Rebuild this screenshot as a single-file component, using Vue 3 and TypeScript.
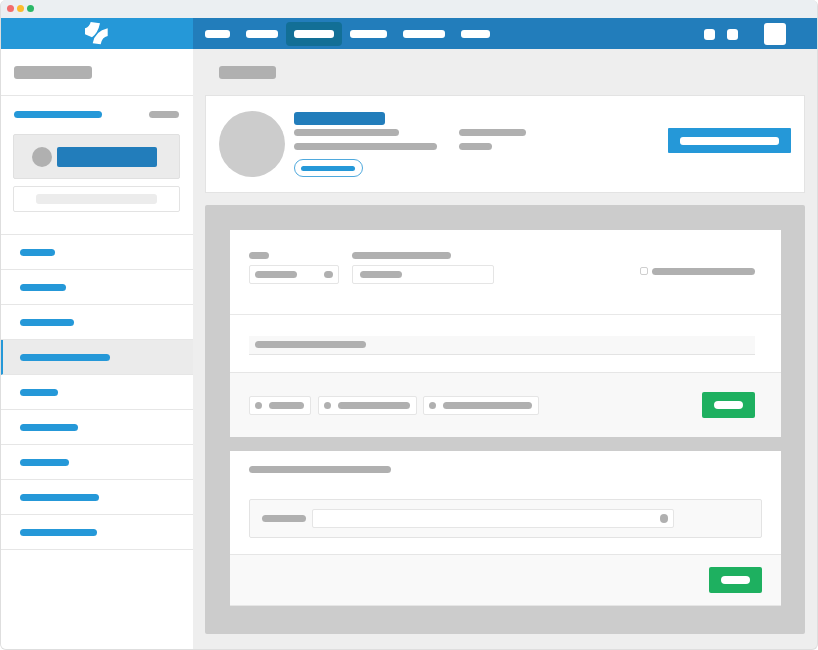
<script setup lang="ts">
interface SideItem {
  id: number
  width: number
  active?: boolean
}

const topLinks = [25, 32, 40, 37, 42, 29]
const activeLink = 2

const sideItems: SideItem[] = [
  { id: 1, width: 35 },
  { id: 2, width: 46 },
  { id: 3, width: 54 },
  { id: 4, width: 90, active: true },
  { id: 5, width: 38 },
  { id: 6, width: 58 },
  { id: 7, width: 49 },
  { id: 8, width: 79 },
  { id: 9, width: 77 }
]

const chips = [35, 72, 89]
</script>

<template>
  <div class="window">
    <div class="titlebar">
      <i class="light red"></i>
      <i class="light yellow"></i>
      <i class="light green"></i>
    </div>

    <header class="topbar">
      <div class="brand">
        <svg width="24" height="23" viewBox="0 0 24 23" fill="#fff">
          <path d="M5.700 0 L15 1.300 Q13 11 7 15.300 L0 12.300 L0 6.300 Q4.500 5 5.700 0 Z" />
          <path d="M22.700 6.300 L22.700 14 Q17 15 15.700 22.300 L7.700 21.300 Q10 9 22.700 6.300 Z" />
        </svg>
      </div>
      <nav class="top-nav">
        <div
          v-for="(w, i) in topLinks"
          :key="i"
          class="top-link"
          :class="{ current: i === activeLink }"
        >
          <span class="top-pill" :style="{ width: w + 'px' }"></span>
        </div>
      </nav>
      <div class="top-right">
        <span class="square"></span>
        <span class="square"></span>
        <span class="avatar-small"></span>
      </div>
    </header>

    <div class="body">
      <aside class="sidebar">
        <div class="side-head">
          <span class="bar side-title"></span>
        </div>
        <div class="side-account">
          <div class="account-row">
            <span class="bar blue account-name"></span>
            <span class="bar account-meta"></span>
          </div>
          <div class="account-box">
            <span class="account-dot"></span>
            <span class="account-btn"></span>
          </div>
          <div class="account-input">
            <span class="account-hint"></span>
          </div>
        </div>
        <div
          v-for="item in sideItems"
          :key="item.id"
          class="side-item"
          :class="{ active: item.active }"
        >
          <span class="bar blue" :style="{ width: item.width + 'px' }"></span>
        </div>
      </aside>

      <main class="main">
        <span class="bar crumb"></span>

        <section class="profile">
          <div class="photo"></div>
          <div class="profile-info">
            <span class="profile-name"></span>
            <span class="bar w105"></span>
            <span class="bar w143"></span>
            <span class="outline-btn"><span class="outline-inner"></span></span>
          </div>
          <div class="profile-meta">
            <span class="bar w67"></span>
            <span class="bar w33"></span>
          </div>
          <div class="primary-btn"><span class="primary-inner"></span></div>
        </section>

        <section class="panel">
          <div class="card">
            <div class="filters">
              <div class="field">
                <span class="bar w20"></span>
                <div class="select">
                  <span class="bar w42"></span>
                  <span class="dot"></span>
                </div>
              </div>
              <div class="field">
                <span class="bar w99"></span>
                <div class="input">
                  <span class="bar w42"></span>
                </div>
              </div>
              <div class="check">
                <span class="checkbox"></span>
                <span class="bar w103"></span>
              </div>
            </div>
            <div class="strip-wrap">
              <div class="strip"><span class="bar w111"></span></div>
            </div>
            <div class="chip-row">
              <div v-for="(w, i) in chips" :key="i" class="chip">
                <span class="dot"></span>
                <span class="bar" :style="{ width: w + 'px' }"></span>
              </div>
              <div class="green-btn"><span class="green-inner"></span></div>
            </div>
          </div>

          <div class="card second">
            <div class="second-body">
              <span class="bar w142"></span>
              <div class="search-box">
                <span class="bar w44"></span>
                <div class="search-input"><span class="search-dot"></span></div>
              </div>
            </div>
            <div class="second-foot">
              <div class="green-btn"><span class="green-inner"></span></div>
            </div>
          </div>
        </section>
      </main>
    </div>
  </div>
</template>

<style>
html,
body {
  margin: 0;
  background: #fff;
}
</style>

<style scoped>
.window {
  width: 818px;
  height: 650px;
  box-sizing: border-box;
  border: 1px solid #dedede;
  border-top: 0;
  border-radius: 6px;
  overflow: hidden;
  display: flex;
  flex-direction: column;
  background: #eee;
}

.titlebar {
  height: 18px;
  box-sizing: border-box;
  flex: none;
  background: #ebeff2;
  display: flex;
  align-items: center;
  gap: 3px;
  padding: 0 0 1px 6px;
}

.light {
  width: 7px;
  height: 7px;
  border-radius: 50%;
}
.red { background: #f26d6d; }
.yellow { background: #fcbc2d; }
.green { background: #2bb867; }

.topbar {
  height: 31px;
  flex: none;
  display: flex;
  background: #227dbb;
}

.brand {
  width: 192px;
  flex: none;
  background: #2598d8;
  display: flex;
  align-items: center;
  justify-content: center;
}

.top-nav {
  display: flex;
  align-items: center;
  padding-left: 4px;
}

.top-link {
  height: 24px;
  padding: 0 8px;
  display: flex;
  align-items: center;
  border-radius: 4px;
}
.top-link.current {
  background: #126f96;
}

.top-pill {
  height: 8px;
  background: #fff;
  border-radius: 3px;
}

.top-right {
  margin-left: auto;
  display: flex;
  align-items: center;
  padding-right: 31px;
}

.square {
  width: 11px;
  height: 11px;
  margin: 1px 12px 0 0;
  background: #fff;
  border-radius: 3px;
}
.square + .square {
  margin-right: 26px;
}

.avatar-small {
  width: 22px;
  height: 22px;
  background: #fff;
  border-radius: 3px;
}

.body {
  flex: 1;
  display: flex;
  min-height: 0;
}

.bar {
  display: block;
  height: 7px;
  background: #b0b0b0;
  border-radius: 3.500px;
  flex: none;
}
.bar.blue {
  background: #2598d8;
}

.w20 { width: 20px; }
.w33 { width: 33px; }
.w42 { width: 42px; }
.w44 { width: 44px; }
.w67 { width: 67px; }
.w99 { width: 99px; }
.w103 { width: 103px; }
.w105 { width: 105px; }
.w111 { width: 111px; }
.w142 { width: 142px; }
.w143 { width: 143px; }

.sidebar {
  width: 192px;
  flex: none;
  background: #fff;
}

.side-head {
  height: 47px;
  box-sizing: border-box;
  padding: 17px 0 0 13px;
  border-bottom: 1px solid #e6e6e6;
}

.side-title {
  width: 78px;
  height: 13px;
  border-radius: 3px;
}

.side-account {
  box-sizing: border-box;
  height: 139px;
  padding: 15px 13px 0 12px;
  border-bottom: 1px solid #e6e6e6;
}

.account-row {
  display: flex;
  justify-content: space-between;
  margin: 0 1px;
}
.account-name { width: 88px; }
.account-meta { width: 30px; }

.account-box {
  height: 45px;
  box-sizing: border-box;
  margin-top: 16px;
  display: flex;
  align-items: center;
  padding-left: 18px;
  gap: 5px;
  background: #ebebeb;
  border: 1px solid #e0e0e0;
  border-radius: 2px;
}

.account-dot {
  width: 20px;
  height: 20px;
  border-radius: 50%;
  background: #b0b0b0;
}

.account-btn {
  width: 100px;
  height: 20px;
  background: #227dbb;
  border-radius: 2px;
}

.account-input {
  height: 26px;
  box-sizing: border-box;
  margin-top: 7px;
  display: flex;
  align-items: center;
  justify-content: center;
  background: #fff;
  border: 1px solid #e3e3e3;
  border-radius: 2px;
}

.account-hint {
  width: 121px;
  height: 10px;
  background: #ececec;
  border-radius: 3px;
}

.side-item {
  height: 35px;
  box-sizing: border-box;
  display: flex;
  align-items: center;
  padding-left: 19px;
  border-bottom: 1px solid #e6e6e6;
}
.side-item.active {
  background: #ebebeb;
  padding-left: 17px;
  border-left: 2px solid #2598d8;
}

.main {
  flex: 1;
  min-width: 0;
  padding: 17px 12px 0;
}

.crumb {
  width: 57px;
  height: 13px;
  margin-left: 14px;
  border-radius: 3px;
}

.profile {
  height: 98px;
  box-sizing: border-box;
  margin-top: 16px;
  display: flex;
  align-items: flex-start;
  padding: 15px 13px 0 13px;
  background: #fff;
  border: 1px solid #e3e3e3;
}

.photo {
  width: 66px;
  height: 66px;
  flex: none;
  border-radius: 50%;
  background: #ccc;
}

.profile-info {
  width: 165px;
  flex: none;
  margin-left: 9px;
  padding-top: 1px;
  display: flex;
  flex-direction: column;
  align-items: flex-start;
}
.profile-info .bar {
  margin-top: 4px;
}
.profile-info .w143 {
  margin-top: 7px;
}

.profile-name {
  width: 91px;
  height: 13px;
  background: #227dbb;
  border-radius: 3px;
}

.outline-btn {
  width: 69px;
  height: 18px;
  box-sizing: border-box;
  margin-top: 9px;
  display: flex;
  align-items: center;
  padding-left: 6px;
  background: #fff;
  border: 1px solid #4fa9dd;
  border-radius: 9px;
}

.outline-inner {
  width: 54px;
  height: 5px;
  background: #2598d8;
  border-radius: 3px;
}

.profile-meta {
  padding-top: 18px;
  display: flex;
  flex-direction: column;
  gap: 7px;
}

.primary-btn {
  width: 123px;
  height: 25px;
  margin: 17px 0 0 auto;
  display: flex;
  align-items: center;
  justify-content: center;
  background: #2598d8;
  border-radius: 1px;
}

.primary-inner {
  width: 99px;
  height: 8px;
  background: #fff;
  border-radius: 3px;
}

.panel {
  height: 429px;
  box-sizing: border-box;
  margin-top: 12px;
  padding: 25px 24px 0 25px;
  background: #ccc;
  border-radius: 2px;
}

.card {
  background: #fff;
}
.card.second {
  margin-top: 14px;
}

.filters {
  height: 85px;
  box-sizing: border-box;
  display: flex;
  align-items: flex-start;
  gap: 13px;
  padding: 22px 26px 0 19px;
  border-bottom: 1px solid #e8e8e8;
}

.field {
  display: flex;
  flex-direction: column;
  gap: 6px;
}

.select,
.input {
  height: 19px;
  box-sizing: border-box;
  display: flex;
  align-items: center;
  background: #fff;
  border: 1px solid #e5e5e5;
  border-radius: 2px;
}

.select {
  width: 90px;
  justify-content: space-between;
  padding: 0 5px;
}
.select .dot {
  width: 9px;
}

.input {
  width: 142px;
  padding-left: 7px;
}

.dot {
  display: block;
  width: 7px;
  height: 7px;
  flex: none;
  background: #b0b0b0;
  border-radius: 4px;
}

.check {
  margin: 15px 0 0 auto;
  display: flex;
  align-items: center;
  gap: 4px;
}

.checkbox {
  width: 8px;
  height: 8px;
  box-sizing: border-box;
  background: #fff;
  border: 1px solid #cfcfcf;
  border-radius: 2px;
}

.strip-wrap {
  height: 58px;
  box-sizing: border-box;
  padding: 21px 26px 0 19px;
  border-bottom: 1px solid #e6e6e6;
}

.strip {
  height: 19px;
  box-sizing: border-box;
  display: flex;
  align-items: center;
  padding: 0 0 1px 6px;
  background: #f8f8f8;
  border-bottom: 1px solid #e3e3e3;
}

.chip-row {
  height: 64px;
  display: flex;
  align-items: center;
  gap: 6.500px;
  padding: 0 26px 0 19px;
  background: #f8f8f8;
}

.chip {
  height: 19px;
  box-sizing: border-box;
  display: flex;
  align-items: center;
  gap: 7px;
  padding: 0 6px 0 5px;
  background: #fff;
  border: 1px solid #e5e5e5;
  border-radius: 2px;
}

.green-btn {
  width: 53px;
  height: 26px;
  flex: none;
  margin-left: auto;
  display: flex;
  align-items: center;
  justify-content: center;
  background: #1eb060;
  border-radius: 2px;
}

.green-inner {
  width: 29px;
  height: 8px;
  background: #fff;
  border-radius: 4px;
}

.second-body {
  height: 104px;
  box-sizing: border-box;
  padding: 15px 19px 0;
  border-bottom: 1px solid #e6e6e6;
}

.search-box {
  height: 39px;
  box-sizing: border-box;
  margin-top: 26px;
  display: flex;
  align-items: center;
  gap: 6px;
  padding-left: 12px;
  background: #f9f9f9;
  border: 1px solid #e3e3e3;
  border-radius: 2px;
}

.search-input {
  width: 362px;
  height: 19px;
  box-sizing: border-box;
  display: flex;
  align-items: center;
  justify-content: flex-end;
  padding-right: 5px;
  background: #fff;
  border: 1px solid #e5e5e5;
  border-radius: 2px;
}

.search-dot {
  width: 8px;
  height: 9px;
  background: #b0b0b0;
  border-radius: 4px;
}

.second-foot {
  height: 50px;
  display: flex;
  align-items: center;
  padding: 0 19px;
  background: #f9f9f9;
  border-bottom: 1px solid #e6e6e6;
}
</style>
